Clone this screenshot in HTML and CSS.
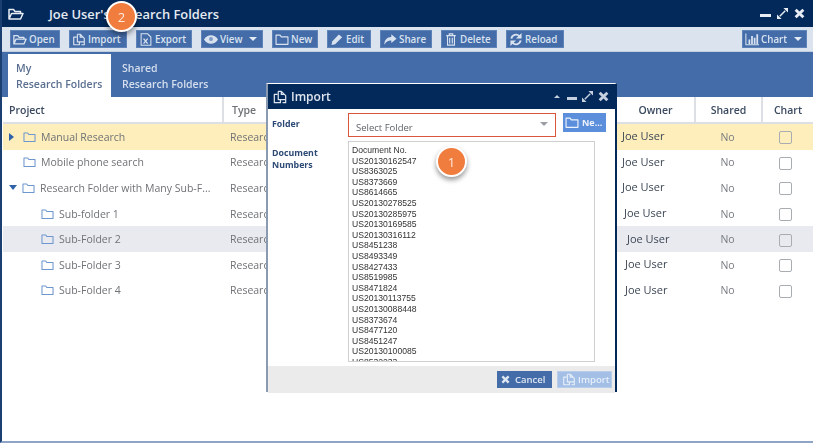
FILE: index.html
```html
<!DOCTYPE html>
<html lang="en">
<head>
<meta charset="utf-8">
<title>Research Folders</title>
<link rel="stylesheet" href="styles.css">
</head>
<body>
<svg class="defs" aria-hidden="true">
  <symbol id="i-open" viewBox="0 0 16 14"><path d="M1 12V2.500h4.500l1.500 2h5.500v2M1 12l2.500-5.500H15L12.500 12z" fill="none" stroke="currentColor" stroke-width="1.500" stroke-linejoin="round"/></symbol>
  <symbol id="i-folder" viewBox="0 0 16 14"><path d="M1.200 12.500V2h4.600l1.400 2h7.600v8.500z" fill="none" stroke="currentColor" stroke-width="1.300" stroke-linejoin="round"/></symbol>
  <symbol id="i-import" viewBox="0 0 16 16"><path d="M5 5H1.500v9.500h7V11M6 1.500h3.500V5H13l1.500 1.500v8H11M9.500 1.500 13 5M6 1.500V11h8" fill="none" stroke="currentColor" stroke-width="1.400" stroke-linejoin="round"/></symbol>
  <symbol id="i-export" viewBox="0 0 14 16"><path d="M1 1h8l4 4v10H1z" fill="none" stroke="currentColor" stroke-width="1.300"/><path d="M4 7l5 6M9 7l-5 6" stroke="currentColor" stroke-width="1.600"/></symbol>
  <symbol id="i-eye" viewBox="0 0 18 12"><path d="M0 6c2.500-3.800 5.500-5.500 9-5.500s6.500 1.700 9 5.500c-2.500 3.800-5.500 5.500-9 5.500S2.500 9.800 0 6z" fill="currentColor"/><circle cx="9" cy="5.500" r="2.600" fill="#7f9cc6"/></symbol>
  <symbol id="i-edit" viewBox="0 0 14 14"><path d="M1 13l1-4 7-7.500 3.500 3.200L5 12z" fill="currentColor"/></symbol>
  <symbol id="i-share" viewBox="0 0 16 14"><path d="M9.500 1l6 5-6 5V8C6 8 3.500 9 1.500 13 1.500 7.500 4.500 4 9.500 4z" fill="currentColor"/></symbol>
  <symbol id="i-trash" viewBox="0 0 12 15"><path d="M.5 3h11M4 3V1h4v2M2 3v11h8V3M4.500 5.500v6.500M7.500 5.500v6.500" fill="none" stroke="currentColor" stroke-width="1.300"/></symbol>
  <symbol id="i-reload" viewBox="0 0 14 14"><path d="M2 6a5 5 0 0 1 8.700-2.500M12 8a5 5 0 0 1-8.700 2.500" fill="none" stroke="currentColor" stroke-width="2"/><path d="M13 0v6H7zM1 14V8h6z" fill="currentColor"/></symbol>
  <symbol id="i-chart" viewBox="0 0 16 14"><path d="M1 0v13h15" fill="none" stroke="currentColor" stroke-width="1.200"/><path d="M4 7h2v5H4zM7 3h2v9H7zM10 5h2v7h-2zM13 1h2v11h-2z" fill="currentColor"/></symbol>
  <symbol id="i-close" viewBox="0 0 10 10"><path d="M1.500 1.500l7 7M8.500 1.500l-7 7" stroke="currentColor" stroke-width="2.600"/></symbol>
  <symbol id="i-max" viewBox="0 0 12 12"><path d="M7 0h5v5zM0 12V7l5 5z" fill="currentColor"/><path d="M9 3L3 9" stroke="currentColor" stroke-width="1.500"/></symbol>
</svg>

<div class="app">
  <header class="titlebar">
    <svg class="title-icon"><use href="#i-open"/></svg>
    <h1 class="title-text">Joe User's Research Folders</h1>
    <div class="window-controls">
      <span class="minimize"></span>
      <svg class="ctl"><use href="#i-max"/></svg>
      <svg class="ctl"><use href="#i-close"/></svg>
    </div>
  </header>

  <nav class="toolbar">
    <button class="tool w-open"><svg class="ti"><use href="#i-open"/></svg>Open</button>
    <button class="tool w-import"><svg class="ti"><use href="#i-import"/></svg>Import</button>
    <button class="tool w-export"><svg class="ti"><use href="#i-export"/></svg>Export</button>
    <button class="tool w-view"><svg class="ti"><use href="#i-eye"/></svg>View<span class="caret"></span></button>
    <button class="tool w-new"><svg class="ti"><use href="#i-folder"/></svg>New</button>
    <button class="tool w-edit"><svg class="ti"><use href="#i-edit"/></svg>Edit</button>
    <button class="tool w-share"><svg class="ti"><use href="#i-share"/></svg>Share</button>
    <button class="tool w-delete"><svg class="ti"><use href="#i-trash"/></svg>Delete</button>
    <button class="tool w-reload"><svg class="ti"><use href="#i-reload"/></svg>Reload</button>
    <button class="tool w-chart"><svg class="ti"><use href="#i-chart"/></svg>Chart<span class="caret"></span></button>
  </nav>

  <div class="tabs">
    <div class="tab active">My<br>Research Folders</div>
    <div class="tab">Shared<br>Research Folders</div>
  </div>

  <main class="table">
    <div class="row head">
      <div class="cell project">Project</div>
      <div class="cell type">Type</div>
      <div class="cell center">Owner</div>
      <div class="cell center">Shared</div>
      <div class="cell center">Chart</div>
    </div>
    <div class="row selected">
      <div class="cell project"><span class="tree right"></span><svg class="fi"><use href="#i-folder"/></svg>Manual Research</div>
      <div class="cell type">Research Folder</div>
      <div class="cell owner">Joe User</div>
      <div class="cell center muted">No</div>
      <div class="cell center"><span class="check"></span></div>
    </div>
    <div class="row">
      <div class="cell project"><span class="tree"></span><svg class="fi"><use href="#i-folder"/></svg>Mobile phone search</div>
      <div class="cell type">Research Folder</div>
      <div class="cell owner">Joe User</div>
      <div class="cell center muted">No</div>
      <div class="cell center"><span class="check"></span></div>
    </div>
    <div class="row">
      <div class="cell project"><span class="tree down"></span><svg class="fi"><use href="#i-folder"/></svg>Research Folder with Many Sub-F...</div>
      <div class="cell type">Research Folder</div>
      <div class="cell owner">Joe User</div>
      <div class="cell center muted">No</div>
      <div class="cell center"><span class="check"></span></div>
    </div>
    <div class="row">
      <div class="cell project sub"><svg class="fi"><use href="#i-folder"/></svg>Sub-folder 1</div>
      <div class="cell type">Research Folder</div>
      <div class="cell owner o2">Joe User</div>
      <div class="cell center muted">No</div>
      <div class="cell center"><span class="check"></span></div>
    </div>
    <div class="row hover">
      <div class="cell project sub"><svg class="fi"><use href="#i-folder"/></svg>Sub-Folder 2</div>
      <div class="cell type">Research Folder</div>
      <div class="cell owner o5">Joe User</div>
      <div class="cell center muted">No</div>
      <div class="cell center"><span class="check"></span></div>
    </div>
    <div class="row">
      <div class="cell project sub"><svg class="fi"><use href="#i-folder"/></svg>Sub-Folder 3</div>
      <div class="cell type">Research Folder</div>
      <div class="cell owner o3">Joe User</div>
      <div class="cell center muted">No</div>
      <div class="cell center"><span class="check"></span></div>
    </div>
    <div class="row">
      <div class="cell project sub"><svg class="fi"><use href="#i-folder"/></svg>Sub-Folder 4</div>
      <div class="cell type">Research Folder</div>
      <div class="cell owner o3">Joe User</div>
      <div class="cell center muted">No</div>
      <div class="cell center"><span class="check"></span></div>
    </div>
  </main>

  <section class="modal">
    <header class="modal-title">
      <svg class="modal-icon"><use href="#i-import"/></svg>
      <span class="modal-name">Import</span>
      <div class="modal-controls">
        <span class="caret-up"></span>
        <span class="minimize"></span>
        <svg class="ctl"><use href="#i-max"/></svg>
        <svg class="ctl"><use href="#i-close"/></svg>
      </div>
    </header>
    <div class="modal-body">
      <label class="label">Folder</label>
      <div class="folder-row">
        <div class="select">Select Folder<span class="select-caret"></span></div>
        <button class="new-btn"><svg class="ti"><use href="#i-folder"/></svg>Ne...</button>
      </div>
      <label class="label label-doc">Document<br>Numbers</label>
      <div class="doclist">Document No.<br>US20130162547<br>US8363025<br>US8373669<br>US8614665<br>US20130278525<br>US20130285975<br>US20130169585<br>US20130316112<br>US8451238<br>US8493349<br>US8427433<br>US8519985<br>US8471824<br>US20130113755<br>US20130088448<br>US8373674<br>US8477120<br>US8451247<br>US20130100085<br>US8532233</div>
    </div>
    <footer class="modal-footer">
      <button class="foot-btn cancel"><svg class="fb-icon"><use href="#i-close"/></svg>Cancel</button>
      <button class="foot-btn import"><svg class="ti"><use href="#i-import"/></svg>Import</button>
    </footer>
  </section>

  <div class="badge badge-import">2</div>
  <div class="badge badge-list">1</div>
</div>
</body>
</html>
```

FILE: styles.css
```css
* { box-sizing: border-box; }
html, body { margin: 0; padding: 0; background: #fff; }
body { width: 813px; height: 443px; overflow: hidden; font-family: "Open Sans", "Noto Sans", sans-serif; }
.defs { display: none; }
.app { position: relative; width: 813px; height: 443px; display: flex; flex-direction: column; border-left: 2px solid #1c3f72; border-bottom: 2px solid #8fa5c8; filter: blur(0.45px); }

.titlebar { height: 27px; background: #03295a; color: #e8edf4; display: flex; align-items: center; padding: 0 8px 0 6px; flex: none; }
.title-icon { width: 16px; height: 14px; }
.title-text { margin: 0 0 0 25px; font-size: 12.9px; font-weight: 600; color: #e6ebf2; }
.window-controls { margin-left: auto; display: flex; align-items: center; gap: 6px; }
.minimize { display: block; width: 11px; height: 3px; background: currentColor; margin-top: 4px; }
.ctl { width: 11px; height: 11px; }

.toolbar { height: 25px; flex: none; background: #dbe3ef; display: flex; align-items: center; gap: 9px; padding: 0 0 0 8px; border-bottom: 1px solid #c3cede; }
.tool { height: 18px; padding: 0 0 0 2px; border: 1px solid #5e83b8; background: #446ca9; color: #d9e3f0; font: 600 9.8px "Open Sans", sans-serif; display: flex; align-items: center; gap: 2px; white-space: nowrap; }
.ti { width: 14px; height: 13px; flex: none; }
.w-open { width: 50px; }
.w-import { width: 58px; }
.w-export { width: 56px; }
.w-view { width: 62px; }
.w-new { width: 46px; }
.w-edit { width: 44px; }
.w-share { width: 52px; }
.w-delete { width: 56px; }
.w-reload { width: 58px; }
.w-chart { width: 65px; margin-left: 169px; }
.caret { width: 0; height: 0; border: 4px solid transparent; border-top: 4px solid #e4ebf4; border-bottom: 0; margin-left: 5px; }

.tabs { height: 45px; flex: none; background: #446ca9; display: flex; padding: 2px 0 0 6px; }
.tab { width: 114px; padding: 6px 0 0 11px; font-size: 10.5px; line-height: 16px; font-weight: 600; color: #d5dfee; }
.tab.active { width: 103px; background: #fff; color: #5a6f90; padding-left: 8px; }

.table { flex: 1; padding-left: 1px; }
.row { display: grid; grid-template-columns: 219px 395px 77px 67px 52px; height: 25.6px; align-items: center; font-size: 10.5px; color: #6b6f75; }
.head { height: 27px; color: #3b4a60; font-weight: 600; border-bottom: 2px solid #dcdfe3; }
.head .cell { height: 100%; display: flex; align-items: center; }
.head .center { justify-content: center; border-left: 2px solid #dcdfe3; }
.head .type { border-left: 2px solid #dcdfe3; padding-left: 8px; }
.head .type + .center { border-left: 0; }
.selected { background: #fdeebb; }
.hover { background: #e8eaef; }
.cell { white-space: nowrap; overflow: hidden; }
.project { display: flex; align-items: center; padding-left: 6px; color: #6f7276; }
.head .project { color: #3b4a60; }
.sub { padding-left: 38px; }
.tree { width: 9px; height: 8px; margin-right: 5px; flex: none; }
.tree.right { width: 0; border: 4px solid transparent; border-left: 5px solid #2f62a8; border-right: 0; margin-right: 9px; }
.tree.down { height: 0; border: 4.5px solid transparent; border-top: 5px solid #2f62a8; border-bottom: 0; margin-right: 5px; width: 0; }
.fi { width: 13px; height: 12px; color: #6f97cf; flex: none; margin-right: 5px; }
.type { padding-left: 8px; color: #6f7276; }
.owner { padding-left: 5px; color: #3c4654; font-size: 11px; margin-bottom: 2px; }
.o2 { padding-left: 7px; }
.o3 { padding-left: 8px; }
.o5 { padding-left: 10px; }
.center { text-align: center; }
.muted { color: #777b80; }
.check { display: inline-block; width: 13px; height: 13px; border: 1.5px solid #a9adb2; border-radius: 2px; vertical-align: middle; margin-right: 4px; }

.modal { position: absolute; left: 264px; top: 83px; width: 351px; height: 309px; background: #fff; display: flex; flex-direction: column; border-top: 1px solid #fff; border-left: 2px solid #8a9ab0; border-right: 2px solid #03295a; }
.modal-title { height: 25px; flex: none; background: #03295a; color: #dfe5ee; display: flex; align-items: center; padding: 0 6px 0 5px; }
.modal-icon { width: 14px; height: 14px; }
.modal-name { font-size: 12px; margin-left: 4px; font-weight: 600; }
.modal-controls { margin-left: auto; display: flex; align-items: center; gap: 5px; color: #c6d0de; }
.modal-controls .minimize { width: 10px; }
.caret-up { width: 0; height: 0; border: 3.500px solid transparent; border-bottom: 3.500px solid #c6d0de; border-top: 0; margin-right: 2px; }
.modal-body { flex: 1; display: grid; grid-template-columns: 76px 1fr; grid-template-rows: 28px 1fr; padding: 4px 0 4px 4px; }
.label { font-size: 8.8px; line-height: 12px; font-weight: 700; color: #2c4a75; padding-top: 5px; }
.label-doc { padding-top: 6px; }
.folder-row { display: flex; align-items: flex-start; gap: 7px; }
.select { width: 208px; height: 24px; border: 1.5px solid #d9563a; font-size: 9.5px; color: #5e6268; padding: 7px 0 0 7px; position: relative; }
.select-caret { position: absolute; right: 7px; top: 8px; width: 0; height: 0; border: 4px solid transparent; border-top: 4px solid #9a9ea4; border-bottom: 0; }
.new-btn { width: 43px; height: 19px; border: 0; background: #5b8fdc; color: #eef3fb; font: 700 9px "Open Sans", sans-serif; display: flex; align-items: center; gap: 3px; padding: 0 0 0 2px; }
.doclist { width: 247px; height: 221px; border: 1px solid #cfcfcf; padding: 3px 0 0 3px; font: 8.6px/10.6px "Liberation Sans", sans-serif; color: #333; overflow: hidden; }
.modal-footer { height: 27px; flex: none; background: #ebebeb; display: flex; justify-content: flex-end; align-items: flex-start; gap: 5px; padding: 5px 3px 0 0; }
.foot-btn { height: 17px; border: 0; color: #dfe7f2; font: 600 9.5px "Open Sans", sans-serif; display: flex; align-items: center; padding: 0 0 0 4px; }
.cancel { width: 55px; background: #446ca9; gap: 5px; }
.fb-icon { width: 9px; height: 9px; }
.import { width: 55px; background: #a3bfe6; border: 1px solid #b7cdea; gap: 2px; color: #e6eef9; }

.badge { position: absolute; width: 31px; height: 31px; border-radius: 50%; background: #f07c3e; color: #fde9dc; font-size: 13px; display: flex; align-items: center; justify-content: center; border: 2px solid #fff; box-shadow: 0 3px 5px rgba(0,0,0,.4); }
.badge-import { left: 104px; top: 1px; }
.badge-list { left: 434px; top: 146px; }
```
